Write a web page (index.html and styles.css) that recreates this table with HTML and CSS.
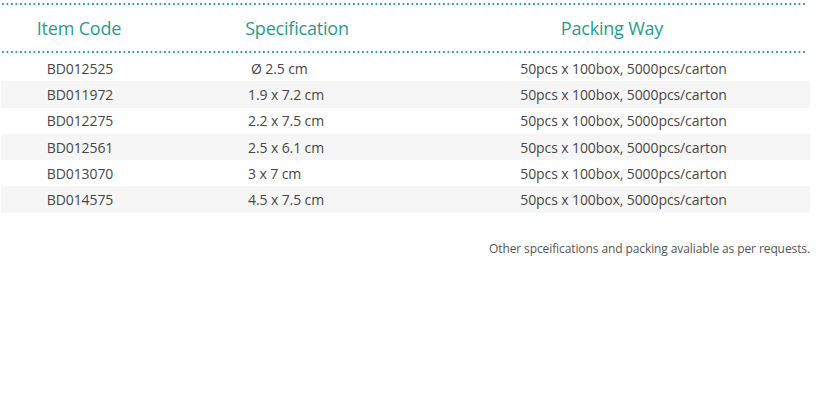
FILE: index.html
```html
<!DOCTYPE html>
<html>
<head>
<meta charset="utf-8">
<link rel="stylesheet" href="styles.css">
</head>
<body>
<div class="sheet">
  <div class="dots"></div>
  <div class="row head">
    <div class="c1">Item Code</div>
    <div class="c2">Specification</div>
    <div class="c3">Packing Way</div>
  </div>
  <div class="dots"></div>
  <div class="body">
    <div class="row"><div class="c1">BD012525</div><div class="c2 phi">Ø 2.5 cm</div><div class="c3">50pcs x 100box, 5000pcs/carton</div></div>
    <div class="row alt"><div class="c1">BD011972</div><div class="c2">1.9 x 7.2 cm</div><div class="c3">50pcs x 100box, 5000pcs/carton</div></div>
    <div class="row"><div class="c1">BD012275</div><div class="c2">2.2 x 7.5 cm</div><div class="c3">50pcs x 100box, 5000pcs/carton</div></div>
    <div class="row alt"><div class="c1">BD012561</div><div class="c2">2.5 x 6.1 cm</div><div class="c3">50pcs x 100box, 5000pcs/carton</div></div>
    <div class="row"><div class="c1">BD013070</div><div class="c2">3 x 7 cm</div><div class="c3">50pcs x 100box, 5000pcs/carton</div></div>
    <div class="row alt"><div class="c1">BD014575</div><div class="c2">4.5 x 7.5 cm</div><div class="c3">50pcs x 100box, 5000pcs/carton</div></div>
  </div>
  <p class="note">Other spceifications and packing avaliable as per requests.</p>
</div>
</body>
</html>
```
FILE: styles.css
```css
html, body {
  margin: 0;
  padding: 0;
  background: #ffffff;
}
.sheet {
  width: 810px;
  padding-top: 3px;
  font-family: "Open Sans", "Noto Sans", sans-serif;
  color: #474747;
}
.dots {
  margin-left: 2px;
  width: 805px;
  height: 2px;
  background-image: linear-gradient(to right, #2aa596 0, #2aa596 2px, transparent 2px);
  background-size: 4.5px 2px;
  background-repeat: repeat-x;
}
.row {
  display: grid;
  grid-template-columns: 158px 278px 1fr;
  align-items: center;
}
.head {
  height: 46px;
  font-size: 18px;
  color: #1f9e8e;
  letter-spacing: -0.2px;
}
.head .c1, .head .c2 { text-align: center; }
.head .c3 { text-align: center; padding-right: 22px; }
.body {
  margin-top: 2px;
  margin-left: 1px;
}
.body .row {
  height: 26.3px;
  font-size: 14px;
  letter-spacing: -0.1px;
}
.body .row.alt { background: #f6f6f6; }
.body .c1 { text-align: center; }
.body .c2 { padding-left: 89px; }
.body .c2.phi { padding-left: 92px; }
.body .c3 { text-align: center; }
.note {
  margin: 27px 0 0 0;
  text-align: right;
  font-size: 12px;
  letter-spacing: -0.1px;
  color: #555555;
}
```
